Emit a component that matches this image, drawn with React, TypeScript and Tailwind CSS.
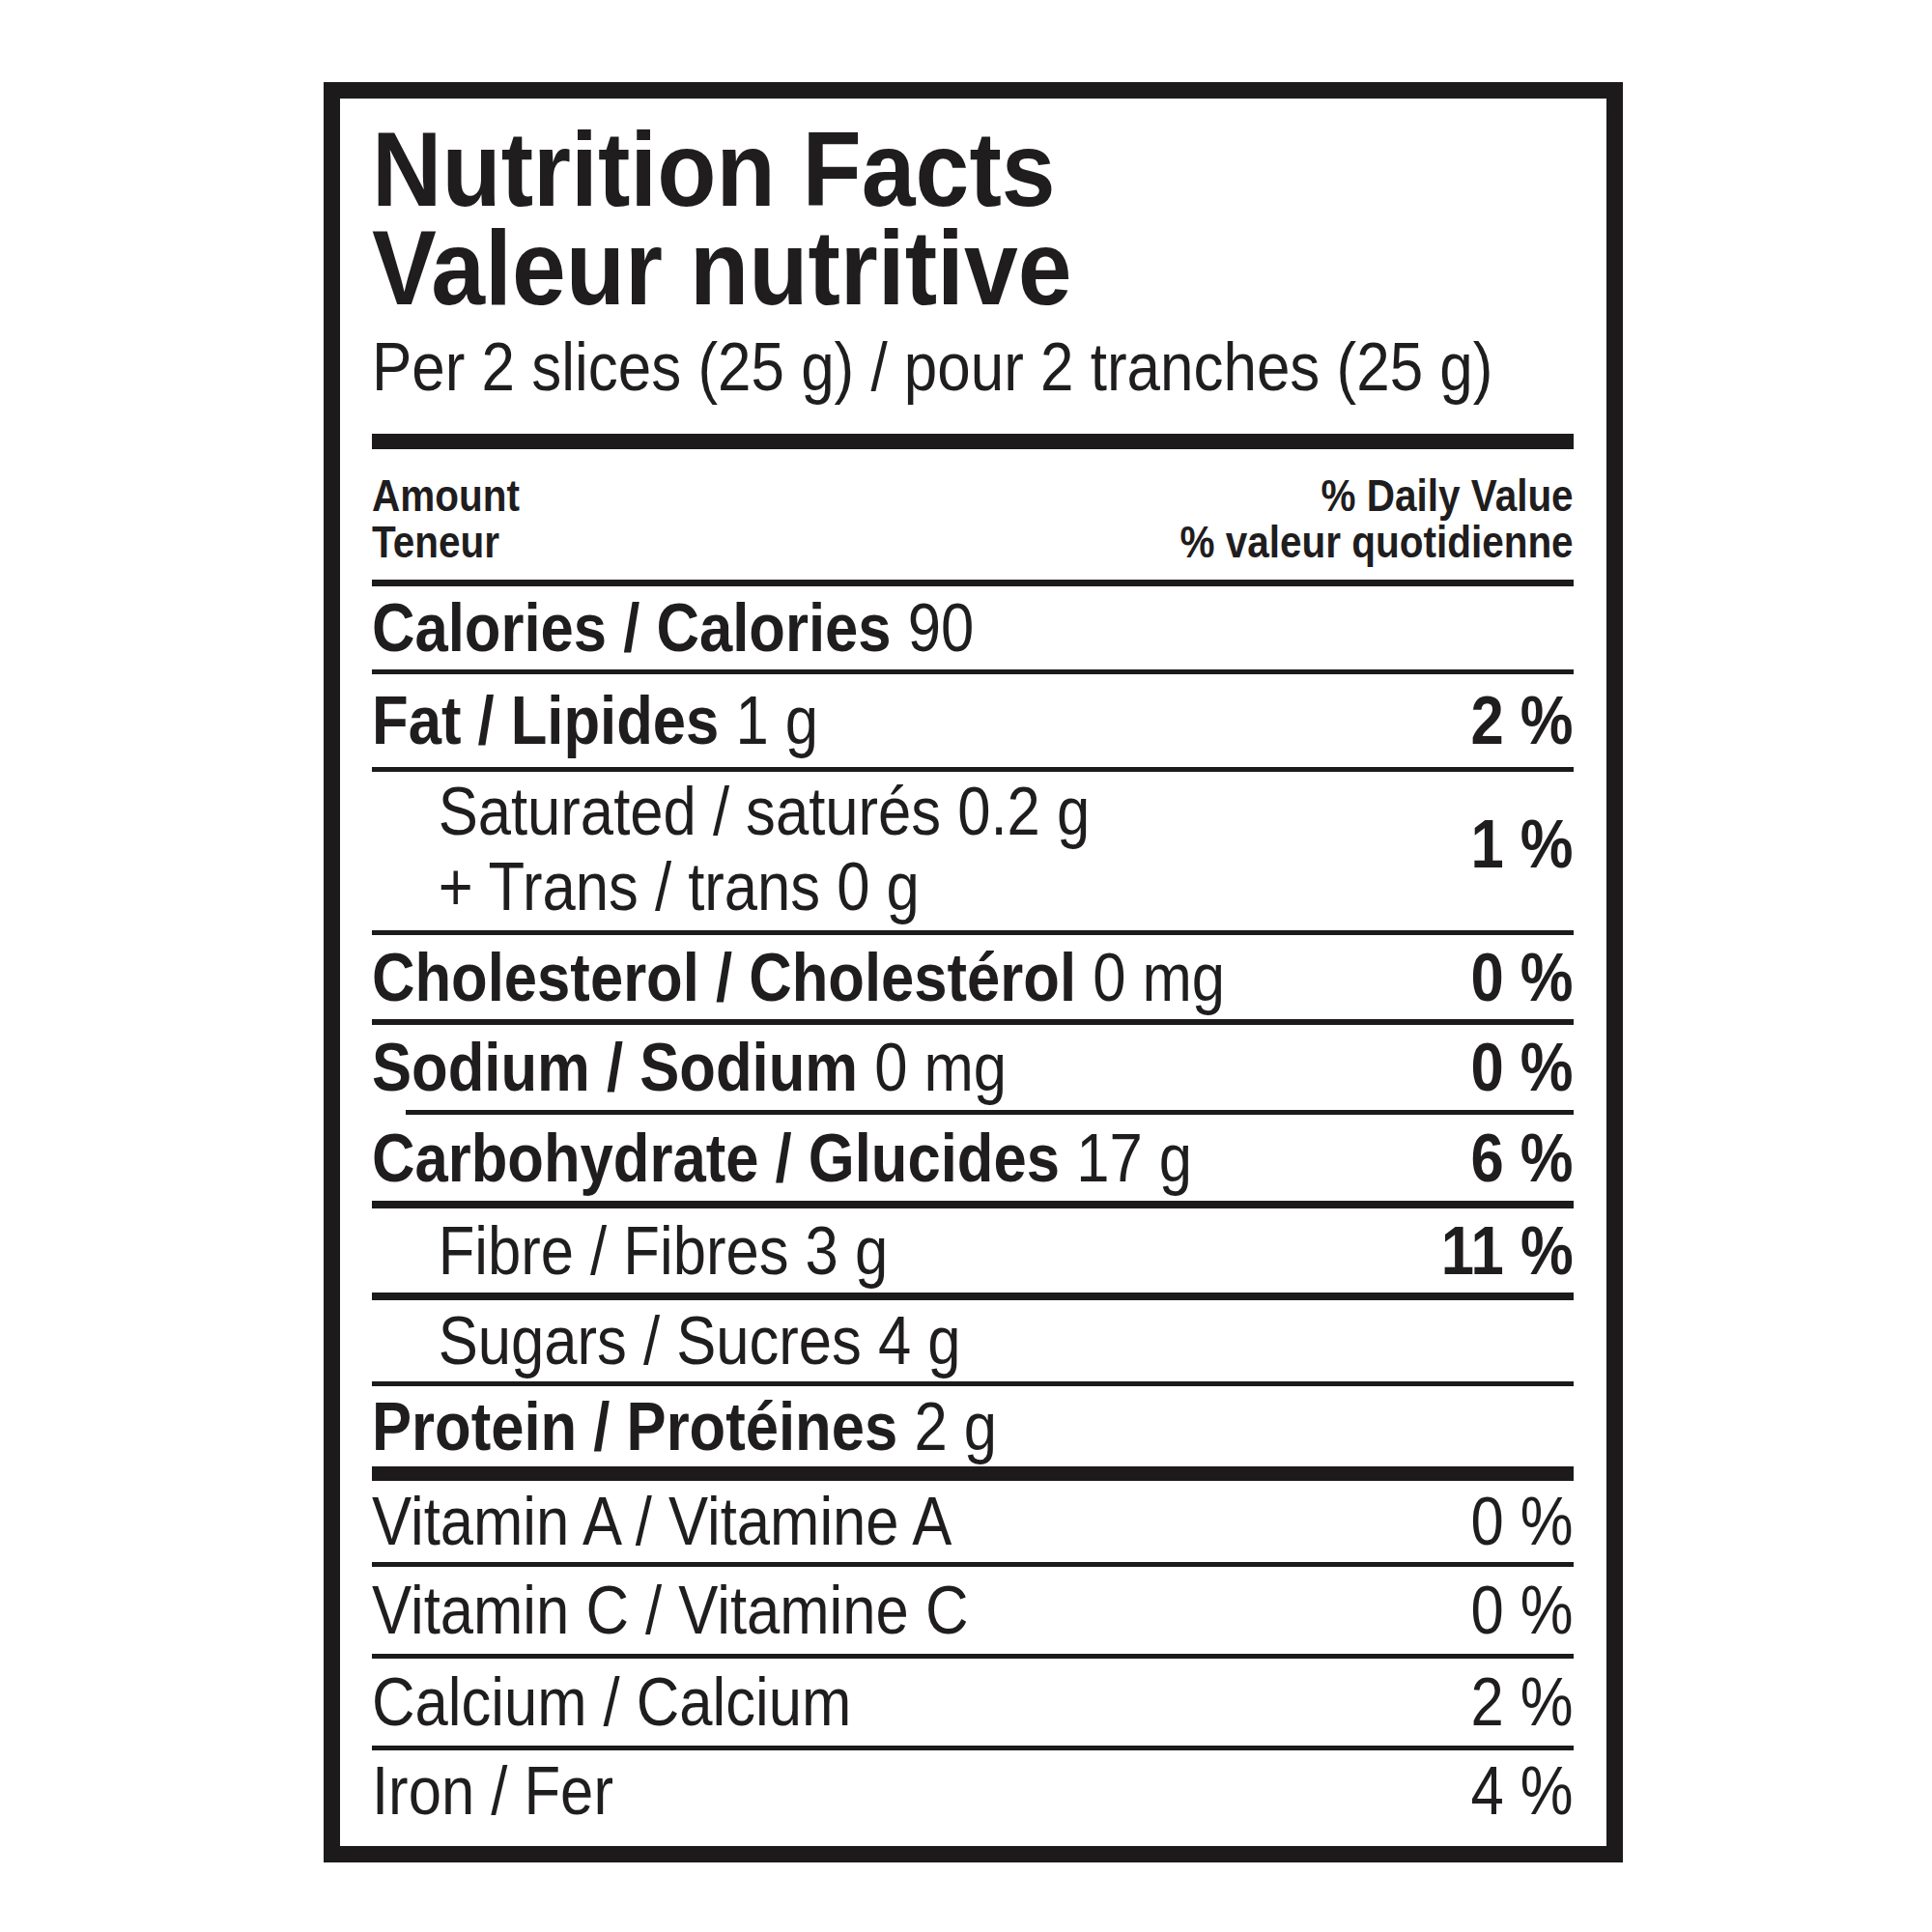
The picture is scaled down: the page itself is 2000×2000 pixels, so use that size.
import type { ReactNode } from "react";

type RowProps = {
  h: string;
  indent?: boolean;
  children: ReactNode;
  dv?: string;
  dvBold?: boolean;
};

function Row({ h, indent, children, dv, dvBold = true }: RowProps) {
  return (
    <div className={`flex items-center justify-between ${h}`}>
      <div className={`whitespace-nowrap origin-left scale-x-[0.88] ${indent ? "pl-[78px]" : ""}`}>
        {children}
      </div>
      {dv && (
        <div
          className={`whitespace-nowrap origin-right scale-x-[0.88] ${dvBold ? "font-bold" : ""}`}
        >
          {dv}
        </div>
      )}
    </div>
  );
}

function Rule({ cls }: { cls: string }) {
  return <div className={`bg-[#1c1a1b] ${cls}`} />;
}

export default function App() {
  return (
    <div className="min-h-screen bg-white font-['Liberation_Sans',Arial,sans-serif] text-[#1f1d1e]">
      <div className="pl-[335px] pt-[85px]">
        <div className="flex h-[1843px] w-[1345px] flex-col border-[17px] border-[#1c1a1b] pl-[33px] pr-[34px] pt-[22px]">
          {/* heading */}
          <h1 className="text-[109px] font-bold leading-[102px]">
            <div className="whitespace-nowrap origin-left scale-x-[0.92]">Nutrition Facts</div>
            <div className="whitespace-nowrap origin-left scale-x-[0.92]">Valeur nutritive</div>
          </h1>
          <div className="whitespace-nowrap origin-left scale-x-[0.885] text-[70px] leading-[104px]">
            Per 2 slices (25 g) / pour 2 tranches (25 g)
          </div>
          <Rule cls="mt-[17px] h-[16px]" />

          {/* column headers */}
          <div className="flex justify-between pb-[15px] pt-[24px] text-[46px] font-bold leading-[48px]">
            <div className="whitespace-nowrap origin-left scale-x-[0.88]">
              <div>Amount</div>
              <div>Teneur</div>
            </div>
            <div className="whitespace-nowrap text-right origin-right scale-x-[0.88]">
              <div>% Daily Value</div>
              <div>% valeur quotidienne</div>
            </div>
          </div>
          <Rule cls="h-[7px]" />

          <div className="text-[70px] leading-[70px]">
            <Row h="h-[86px]">
              <span className="font-bold">Calories / Calories</span> 90
            </Row>
            <Rule cls="h-[5px]" />
            <Row h="h-[96px]" dv="2 %">
              <span className="font-bold">Fat / Lipides</span> 1 g
            </Row>
            <Rule cls="h-[5px]" />
            <div className="flex h-[164px] items-center justify-between pb-[4px]">
              <div className="whitespace-nowrap origin-left scale-x-[0.88] pl-[78px] leading-[78px]">
                <div>Saturated / saturés 0.2 g</div>
                <div>+ Trans / trans 0 g</div>
              </div>
              <div className="whitespace-nowrap font-bold origin-right scale-x-[0.88] pb-[10px]">1 %</div>
            </div>
            <Rule cls="h-[5px]" />
            <Row h="h-[87px]" dv="0 %">
              <span className="font-bold">Cholesterol / Cholestérol</span> 0 mg
            </Row>
            <Rule cls="h-[6px]" />
            <Row h="h-[88px]" dv="0 %">
              <span className="font-bold">Sodium / Sodium</span> 0 mg
            </Row>
            <Rule cls="ml-[35px] h-[5px]" />
            <Row h="h-[89px]" dv="6 %">
              <span className="font-bold">Carbohydrate / Glucides</span> 17 g
            </Row>
            <Rule cls="h-[8px]" />
            <Row h="h-[87px]" indent dv="11 %">
              Fibre / Fibres 3 g
            </Row>
            <Rule cls="h-[8px]" />
            <Row h="h-[84px]" indent>
              Sugars / Sucres 4 g
            </Row>
            <Rule cls="h-[5px]" />
            <Row h="h-[83px]">
              <span className="font-bold">Protein / Protéines</span> 2 g
            </Row>
            <Rule cls="h-[15px]" />
            <Row h="h-[84px]" dv="0 %" dvBold={false}>
              Vitamin A / Vitamine A
            </Row>
            <Rule cls="h-[5px]" />
            <Row h="h-[90px]" dv="0 %" dvBold={false}>
              Vitamin C / Vitamine C
            </Row>
            <Rule cls="h-[5px]" />
            <Row h="h-[90px]" dv="2 %" dvBold={false}>
              Calcium / Calcium
            </Row>
            <Rule cls="h-[5px]" />
            <Row h="h-[84px]" dv="4 %" dvBold={false}>
              Iron / Fer
            </Row>
          </div>
        </div>
      </div>
    </div>
  );
}
